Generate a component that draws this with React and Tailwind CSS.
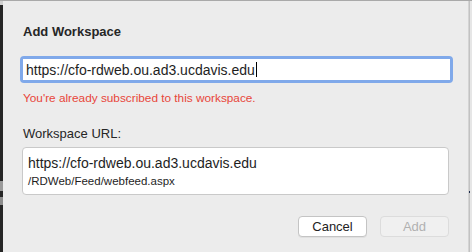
export default function App() {
  const font = { fontFamily: '"Liberation Sans", Arial, sans-serif' };
  return (
    <div className="w-[472px] h-[252px] flex flex-col bg-[#ececec] overflow-hidden" style={font}>
      <div className="h-[1px] bg-[#a9a9a9] shrink-0" />
      <div className="flex flex-1 min-h-0">
        <div className="w-[3px] flex flex-col shrink-0">
          <div className="h-[4px] bg-[#d0d0d0]" />
          <div className="flex-1 bg-[#262626] flex flex-col">
            <div className="h-[176px]" />
            <div className="h-[10px] bg-[#9a9a9a]" />
            <div className="h-[6px]" />
            <div className="h-[8px] bg-[#8c8c8c]" />
          </div>
        </div>
        <div className="flex-1 bg-[#ececec] flex flex-col pl-[20px] pr-[16px]">
          <div className="text-[13px] font-bold text-[#262626] pt-[23px] leading-[16px]">Add Workspace</div>
          <div className="mt-[16px] -ml-[3px] -mr-[1px] h-[27px] rounded-[4px] bg-[#80a9ea] p-[3px]">
            <div className="h-full bg-white flex items-center pl-[3px]">
              <span className="text-[14px] text-[#1e1e1e] leading-none">https://cfo-rdweb.ou.ad3.ucdavis.edu</span>
              <span className="w-[1px] h-[15px] bg-black ml-[1px]" />
            </div>
          </div>
          <div className="mt-[8px] text-[11.8px] text-[#e8463a] leading-[14px]">You're already subscribed to this workspace.</div>
          <div className="mt-[21px] text-[13px] text-[#262626] leading-[16px]">Workspace URL:</div>
          <div className="mt-[5px] -ml-[1px] mr-[3px] h-[48px] rounded-[4px] bg-white border border-[#c9c9c9] pl-[5px] pt-[7px]">
            <div className="text-[14px] text-[#1e1e1e] leading-[16px]">https://cfo-rdweb.ou.ad3.ucdavis.edu</div>
            <div className="text-[11.5px] text-[#1e1e1e] leading-[14px] mt-[3px]">/RDWeb/Feed/webfeed.aspx</div>
          </div>
          <div className="mt-[21px] flex justify-end gap-[13px] mr-[3px]">
            <div className="w-[69px] h-[21px] rounded-[4px] bg-white border border-[#c4c4c4] shadow-[0_1px_0_rgba(0,0,0,0.05)] flex items-center justify-center text-[13px] text-[#222]">Cancel</div>
            <div className="w-[69px] h-[21px] rounded-[4px] bg-[#f0f0f0] border border-[#dcdcdc] flex items-center justify-center text-[13px] text-[#b0b0b0]">Add</div>
          </div>
        </div>
        <div className="w-[4px] shrink-0 flex bg-[#e6e6e6] border-l border-[#d4d4d4]">
          <div className="w-[1px] bg-[#c2c2c2] flex flex-col">
            <div className="h-[190px]" />
            <div className="h-[2px] bg-[#1c2a4a]" />
          </div>
        </div>
      </div>
    </div>
  );
}
